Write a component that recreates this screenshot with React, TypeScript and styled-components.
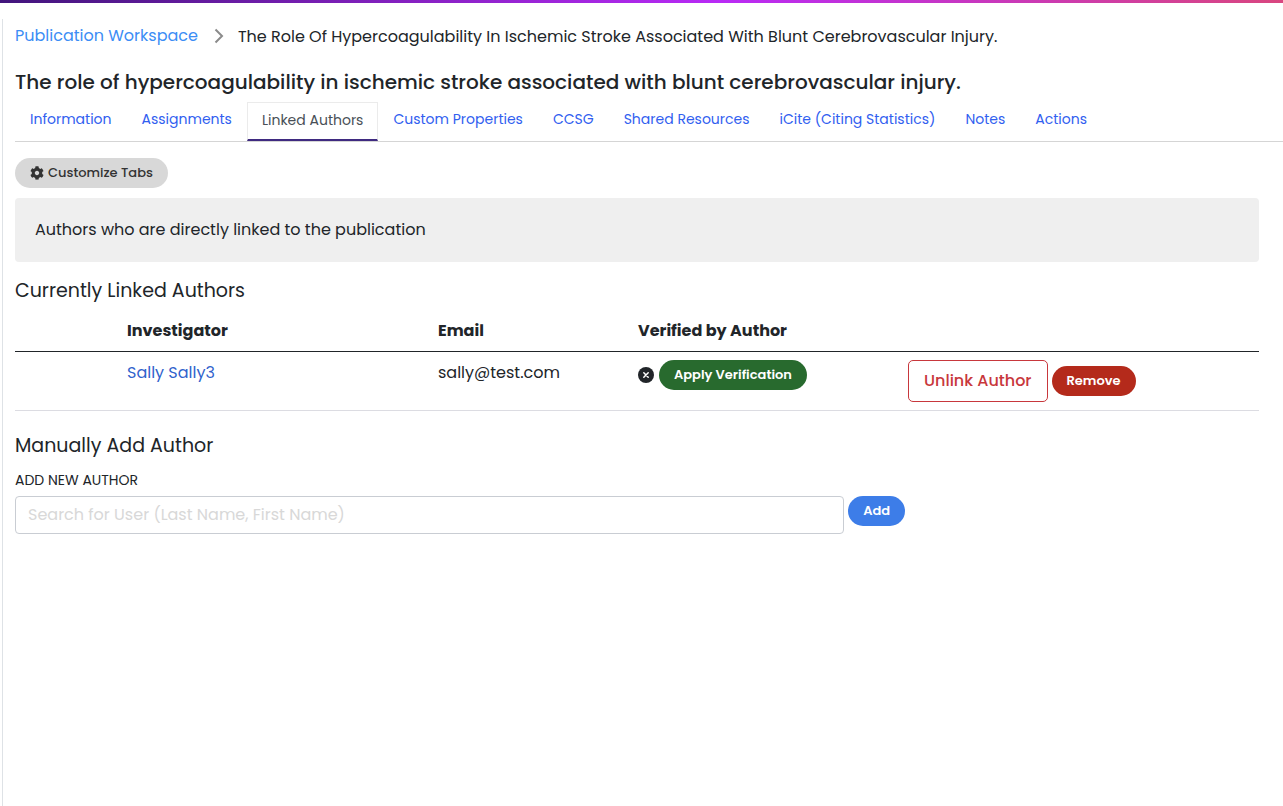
import React from 'react';
import styled, { createGlobalStyle, css } from 'styled-components';
import { FaCog } from 'react-icons/fa';

const GlobalStyle = createGlobalStyle`
  *, *::before, *::after { box-sizing: border-box; }
  body {
    margin: 0;
    background: #fff;
    color: #212529;
    font-family: Poppins, Inter, "Liberation Sans", sans-serif;
    font-size: 16px;
    line-height: 24px;
  }
  button, input { font-family: inherit; }
  a { text-decoration: none; }
`;

const Page = styled.div`
  display: flex;
  flex-direction: column;
  min-height: 100vh;
`;

const AccentBar = styled.div`
  height: 3px;
  background: linear-gradient(90deg, #42157c, #b92af6 56%, #d9467f);
`;

const Main = styled.main`
  flex: 1;
  margin: 16px 0 0 2px;
  padding-left: 12px;
  border-left: 1px solid #dee2e6;
`;

const Breadcrumb = styled.nav`
  display: flex;
  align-items: center;
  gap: 14px;
  padding-top: 4px;
`;

const CrumbLink = styled.a`
  color: #3b8df5;
`;

const CurrentCrumb = styled.span`
  padding-top: 2px;
`;

const Chevron = styled.svg`
  width: 12px;
  height: 16px;
  fill: none;
  stroke: #8b8b8b;
  stroke-width: 2;
`;

const Title = styled.h1`
  margin: 21px 0 8px;
  font-size: 20px;
  font-weight: 500;
  line-height: 24px;
`;

const TabBar = styled.nav`
  display: flex;
  border-bottom: 1px solid #d5d5d5;
`;

const Tab = styled.a<{ $active?: boolean }>`
  height: 39px;
  padding: 4px 14px 8px;
  border: 1px solid transparent;
  font-size: 14px;
  color: #3160f0;
  ${(p) =>
    p.$active &&
    css`
      padding-top: 5px;
      color: #495057;
      border-color: #ebebeb;
      border-bottom: 2px solid #3f2a80;
    `}
`;

const Content = styled.div`
  padding: 16px 24px 0 0;
`;

const tones = {
  grey: ['#d8d8d8', '#333333'],
  green: ['#286a2e', '#ffffff'],
  red: ['#b42a1b', '#ffffff'],
  blue: ['#3d7de8', '#ffffff'],
};

const Pill = styled.button<{ $tone: keyof typeof tones }>`
  display: inline-flex;
  align-items: center;
  gap: 4px;
  height: 30px;
  padding: 0 15px;
  border: 0;
  border-radius: 15px;
  background: ${(p) => tones[p.$tone][0]};
  color: ${(p) => tones[p.$tone][1]};
  font-size: 13px;
  font-weight: ${(p) => (p.$tone === 'grey' ? 500 : 600)};
  white-space: nowrap;
`;

const OutlineButton = styled.button`
  height: 42px;
  padding: 0 15px 2px;
  border: 1px solid #c8373c;
  border-radius: 5px;
  background: #fff;
  color: #c8373c;
  font-size: 16px;
  font-weight: 500;
  white-space: nowrap;
`;

const Notice = styled.p`
  margin: 10px 0 16px;
  padding: 20px;
  border-radius: 4px;
  background: #efefef;
`;

const SectionTitle = styled.h2`
  margin: 0;
  font-size: 19px;
  font-weight: 400;
  line-height: 26px;
`;

const AuthorTable = styled.table`
  width: 100%;
  margin: 7px 0 22px;
  border-collapse: collapse;
  table-layout: fixed;
  th, td {
    padding: 8px;
    text-align: left;
    vertical-align: top;
  }
  th {
    border-bottom: 1px solid #212529;
    font-weight: 700;
  }
  td {
    border-bottom: 1px solid #dcdce2;
    line-height: 26px;
  }
`;

const AuthorLink = styled.a`
  color: #2f62cc;
`;

const CellGroup = styled.div`
  display: flex;
  align-items: center;
  gap: 4px;
`;

const StatusMark = styled.svg`
  flex: none;
  width: 17px;
  height: 16px;
`;

const Label = styled.label`
  display: block;
  margin: 9px 0 4px;
  font-size: 14px;
`;

const AddRow = styled.form`
  display: flex;
  align-items: flex-start;
  gap: 4px;
`;

const SearchInput = styled.input`
  flex: 0 0 66.66%;
  min-width: 0;
  height: 38px;
  padding: 4px 12px 6px;
  border: 1px solid #c9cdd3;
  border-radius: 4px;
  color: #212529;
  font-size: 16px;
  &::placeholder { color: #d8d8d8; opacity: 1; }
`;

const tabs = [
  'Information',
  'Assignments',
  'Linked Authors',
  'Custom Properties',
  'CCSG',
  'Shared Resources',
  'iCite (Citing Statistics)',
  'Notes',
  'Actions',
];

export default function App() {
  return (
    <Page>
      <GlobalStyle />
      <AccentBar />
      <Main>
        <Breadcrumb aria-label="Breadcrumb">
          <CrumbLink href="#workspace">Publication Workspace</CrumbLink>
          <Chevron viewBox="0 0 12 16" aria-hidden="true">
            <path d="M3.5 1.5 10 8 3.5 14.5" />
          </Chevron>
          <CurrentCrumb>
            The Role Of Hypercoagulability In Ischemic Stroke Associated With Blunt Cerebrovascular Injury.
          </CurrentCrumb>
        </Breadcrumb>
        <Title>The role of hypercoagulability in ischemic stroke associated with blunt cerebrovascular injury.</Title>
        <TabBar>
          {tabs.map((tab) => (
            <Tab key={tab} href="#tab" $active={tab === 'Linked Authors'}>
              {tab}
            </Tab>
          ))}
        </TabBar>
        <Content>
          <Pill type="button" $tone="grey">
            <FaCog size={14} />
            Customize Tabs
          </Pill>
          <Notice>Authors who are directly linked to the publication</Notice>
          <SectionTitle>Currently Linked Authors</SectionTitle>
          <AuthorTable>
            <colgroup>
              <col width="104" />
              <col width="25%" />
              <col width="200" />
              <col width="270" />
              <col />
            </colgroup>
            <thead>
              <tr>
                <th />
                <th>Investigator</th>
                <th>Email</th>
                <th>Verified by Author</th>
                <th />
              </tr>
            </thead>
            <tbody>
              <tr>
                <td />
                <td>
                  <AuthorLink href="#author">Sally Sally3</AuthorLink>
                </td>
                <td>sally@test.com</td>
                <td>
                  <CellGroup>
                    <StatusMark viewBox="0 0 17 16" role="img" aria-label="Not verified">
                      <circle cx="8" cy="8" r="8" fill="#212529" />
                      <path d="M5.8 5.8 10.2 10.2M10.2 5.8 5.8 10.2" stroke="#fff" strokeWidth="1.5" strokeLinecap="round" />
                    </StatusMark>
                    <Pill type="button" $tone="green">Apply Verification</Pill>
                  </CellGroup>
                </td>
                <td>
                  <CellGroup>
                    <OutlineButton type="button">Unlink Author</OutlineButton>
                    <Pill type="button" $tone="red">Remove</Pill>
                  </CellGroup>
                </td>
              </tr>
            </tbody>
          </AuthorTable>
          <SectionTitle>Manually Add Author</SectionTitle>
          <Label htmlFor="author-search">ADD NEW AUTHOR</Label>
          <AddRow onSubmit={(e) => e.preventDefault()}>
            <SearchInput id="author-search" type="text" placeholder="Search for User (Last Name, First Name)" />
            <Pill type="submit" $tone="blue">Add</Pill>
          </AddRow>
        </Content>
      </Main>
    </Page>
  );
}
